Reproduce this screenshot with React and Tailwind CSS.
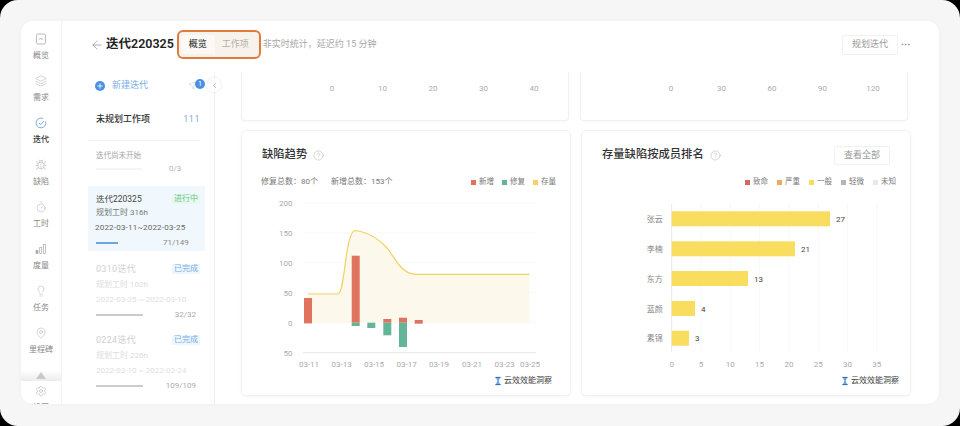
import React from 'react';
import { ArrowLeft, ChevronLeft, CircleHelp, Layers, Lightbulb, MapPin, Plus, Settings, Timer, Bug, Filter, Ellipsis } from 'lucide-react';

const ActivitySquare = ({ className }) => (
    <svg viewBox="0 0 12 12" fill="none" stroke="currentColor" strokeWidth="0.8" className={className}>
        <rect x="1.5" y="1" width="9" height="10" rx="1.5" />
        <path d="M3.8 6h1.2l.6-.8.8 1.2.5-.4h1.2" />
    </svg>
);

const IterIcon = ({ className }) => (
    <svg viewBox="0 0 12 12" fill="none" stroke="currentColor" strokeWidth="0.9" className={className}>
        <path d="M10.6 4.4A4.9 4.9 0 1 1 8.4 1.7" />
        <path d="M4 6l1.7 1.6L9 4" />
    </svg>
);

const MetricIcon = ({ className }) => (
    <svg viewBox="0 0 12 12" className={className} fill="none" stroke="currentColor" strokeWidth="0.7">
        <rect x="1" y="7.5" width="2" height="3" fill="currentColor" />
        <rect x="4.7" y="4.5" width="2" height="6" />
        <rect x="8.4" y="1.5" width="2" height="9" />
    </svg>
);

const navItems = [
    { label: '概览', Icon: ActivitySquare },
    { label: '需求', Icon: Layers },
    { label: '迭代', Icon: IterIcon, active: true },
    { label: '缺陷', Icon: Bug },
    { label: '工时', Icon: Timer },
    { label: '度量', Icon: MetricIcon },
    { label: '任务', Icon: Lightbulb },
    { label: '里程碑', Icon: MapPin },
];

const doneIterations = [
    { name: '0310迭代', hours: '规划工时 102h', dates: '2022-03-25 ~ 2022-03-10', count: '32/32' },
    { name: '0224迭代', hours: '规划工时 226h', dates: '2022-03-10 ~ 2022-02-24', count: '109/109' },
];

const trendLegend = [
    { label: '新增', color: 'bg-[#df7360]' },
    { label: '修复', color: 'bg-[#63b597]' },
    { label: '存量', color: 'bg-[#f6cf6c]' },
];

const rankLegend = [
    { label: '致命', color: 'bg-[#cf6a5c]' },
    { label: '严重', color: 'bg-[#eeaa5c]' },
    { label: '一般', color: 'bg-[#f8dc5c]' },
    { label: '轻微', color: 'bg-[#b5b5b5]' },
    { label: '未知', color: 'bg-[#e8e8e8]' },
];

const trendBars = [
    { x: 304, up: 298, down: 323.4 },
    { x: 351.7, up: 255.7, down: 322.7, green: 326 },
    { x: 367.3, up: 322.7, down: 322.7, green: 328 },
    { x: 383.3, up: 319, down: 322.7, green: 335.3 },
    { x: 399, up: 317.7, down: 322.7, green: 347 },
    { x: 414.7, up: 320, down: 323.7 },
];

const trendDates = [
    ['03-11', 309], ['03-13', 341.7], ['03-15', 374], ['03-17', 406.7],
    ['03-19', 439], ['03-21', 472], ['03-23', 504.7], ['03-25', 530],
];

const rankRows = [
    { name: '张云', value: 27, y: 211.3, end: 830 },
    { name: '李楠', value: 21, y: 241.3, end: 795 },
    { name: '东方', value: 13, y: 271, end: 748 },
    { name: '蓝颜', value: 4, y: 301, end: 695 },
    { name: '素锦', value: 3, y: 330.7, end: 689 },
];

const rankTicks = [0, 5, 10, 15, 20, 25, 30, 35];

const NavItem = ({ label, Icon, active }) => (
    <div className="h-[42px] shrink-0 flex flex-col items-center">
        <div className={`h-4 flex items-center ${active ? 'text-[#6ea6e0]' : 'text-[#aaaaaa]'}`}>
            <Icon className="w-3 h-3" strokeWidth={1} />
        </div>
        <div className={`mt-[4px] text-[8px] leading-[10px] whitespace-nowrap ${active ? 'text-[#333333] font-medium' : 'text-[#888888]'}`}>{label}</div>
    </div>
);

const Sidebar = () => (
    <div className="w-[41px] shrink-0 border-r border-[#f3f3f3] pt-[10px] flex flex-col items-center overflow-hidden">
        {navItems.map(item => <NavItem key={item.label} {...item} />)}
        <div className="mt-[3px] w-full h-[11px] shrink-0 flex justify-center items-end bg-gradient-to-b from-white to-[#ececec]">
            <div className="w-0 h-0 mb-[2px] border-x-[5px] border-x-transparent border-b-[7px] border-b-[#c9c9c9]" />
        </div>
        <div className="mt-[2px]">
            <NavItem label="设置" Icon={Settings} />
        </div>
    </div>
);

const Header = () => (
    <div className="h-[51px] shrink-0 flex items-center pl-[28px] pr-[28px] pb-[4px]">
        <ArrowLeft className="w-[14px] h-[14px] text-[#777777] shrink-0" strokeWidth={1} />
        <div className="ml-[2px] text-[12.5px] font-semibold text-[#222222] whitespace-nowrap">迭代220325</div>
        <div className="ml-[3px] w-[84px] h-[29px] rounded-[6px] border-2 border-[#e07b3c] bg-[#f8f2ed] flex items-center px-[2px]">
            <div className="w-[34px] h-[19px] rounded-[2px] bg-[#fbf8f5] flex items-center justify-center text-[9px] font-medium text-[#444444]">概览</div>
            <div className="ml-[7px] text-[9px] text-[#b5b0ac] whitespace-nowrap">工作项</div>
        </div>
        <div className="ml-[2px] text-[9px] text-[#a8a8a8] whitespace-nowrap">{'非实时统计\uFF0C延迟约 15 分钟'}</div>
        <div className="ml-auto w-[56px] h-5 border border-[#f1f1f1] rounded-[2px] flex items-center justify-center text-[9px] text-[#999999]">规划迭代</div>
        <Ellipsis className="ml-[2px] w-[11px] h-[11px] text-[#888888]" strokeWidth={1.5} />
    </div>
);

const IterationList = () => (
    <div className="relative w-[153px] shrink-0 border-r border-[#f1f1f1] pl-[26px] overflow-visible">
        <div className="h-[26px] flex items-center pl-[7px] pt-[1px]">
            <div className="w-[10px] h-[10px] rounded-full bg-[#4a90e2] flex items-center justify-center">
                <Plus className="w-2 h-2 text-white" strokeWidth={2.5} />
            </div>
            <div className="ml-[7px] text-[9px] text-[#7aaee6]">新建迭代</div>
            <div className="ml-auto mr-[17px] relative">
                <Filter className="w-2 h-2 text-[#aaaaaa] -rotate-12" strokeWidth={1} />
                <div className="absolute -top-[3px] left-[6px] w-[10px] h-[10px] rounded-full bg-[#4a90e2] text-white text-[7px] leading-[10px] text-center">1</div>
            </div>
        </div>
        <div className="absolute right-[-7px] top-[6px] w-[14px] h-[14px] rounded-full bg-white shadow-[0_0_3px_rgba(0,0,0,0.12)] flex items-center justify-center">
            <ChevronLeft className="w-[9px] h-[9px] text-[#777777]" strokeWidth={1.2} />
        </div>
        <div className="w-[112px] h-[43px] border-b border-[#f1f1f1] flex items-center justify-between pl-[8px] pt-[2px] text-[9px]">
            <span className="text-[#333333] font-medium">未规划工作项</span>
            <span className="text-[#84aeda] tracking-[0.5px]">111</span>
        </div>
        <div className="pl-[8px] pt-[9px] h-[45px]">
            <div className="text-[7.5px] leading-[12px] text-[#a5a5a5]">迭代尚未开始</div>
            <div className="mt-[1px] flex items-center h-3">
                <div className="w-[46px] h-[2px] bg-[#f5f5f5]" />
                <div className="ml-[27px] text-[8px] text-[#b5b5b5]">0/3</div>
            </div>
        </div>
        <div className="w-[117px] h-[65px] bg-[#f0f7fd] pl-[8px] pr-[5px] pt-[6px]">
            <div className="h-[14px] flex items-center justify-between text-[8.5px] text-[#444444]">
                <span>迭代220325</span>
                <span className="px-[2px] text-[8px] leading-[10px] bg-[#e9f8ee] text-[#6cc48a]">进行中</span>
            </div>
            <div className="h-[14px] flex items-center text-[8px] text-[#777777]">规划工时 316h</div>
            <div className="h-[15px] flex items-center text-[8px] text-[#666666] tracking-[0.2px] -ml-[1px]">2022-03-11~2022-03-25</div>
            <div className="h-[15px] flex items-center">
                <div className="w-[22px] h-[2px] bg-[#6ea6e0]" />
                <div className="ml-[45px] text-[8px] text-[#888888]">71/149</div>
            </div>
        </div>
        <div className="mt-[11px] flex flex-col gap-[8px]">
            {doneIterations.map(it => (
                <div key={it.name} className="w-[112px] pl-[8px]">
                    <div className="h-[14px] flex items-center justify-between text-[9px] text-[#d0d0d0]">
                        <span className="tracking-[0.3px] pt-[1px]">{it.name}</span>
                        <span className="px-[2px] text-[8px] leading-[10px] bg-[#eef6fd] text-[#78aee6]">已完成</span>
                    </div>
                    <div className="h-[18px] flex items-center text-[8px] text-[#dddddd]">{it.hours}</div>
                    <div className="h-[11px] flex items-center text-[8px] text-[#e0e0e0] whitespace-nowrap">{it.dates}</div>
                    <div className="h-[20px] flex items-center justify-between">
                        <div className="w-[47px] h-[2px] bg-[#cccccc]" />
                        <div className="text-[8px] text-[#aaaaaa] pr-[4px]">{it.count}</div>
                    </div>
                </div>
            ))}
        </div>
    </div>
);

const AxisCard = ({ ticks }) => (
    <div className="w-[328px] h-[49px] bg-white rounded-b-[4px] border border-t-0 border-[#f1f1f1] shadow-[0_1px_2px_rgba(0,0,0,0.03)] pl-[80px] pr-[24px] pt-[12px] flex justify-between">
        {ticks.map(t => <div key={t} className="w-5 text-center text-[8px] leading-[10px] text-[#aaaaaa]">{t}</div>)}
    </div>
);

const Legend = ({ items, gap }) => (
    <div className={`flex items-center ${gap}`}>
        {items.map(it => (
            <div key={it.label} className="flex items-center gap-[3px] text-[7.5px] text-[#777777]">
                <div className={`w-[5px] h-[5px] ${it.color}`} />
                <span>{it.label}</span>
            </div>
        ))}
    </div>
);

const Brand = ({ pad }) => (
    <div className={`h-[18px] ${pad} flex items-center justify-end gap-[3px] text-[8px] text-[#444444]`}>
        <svg viewBox="0 0 8 11" className="w-[6px] h-[10px]">
            <rect x="0.5" y="0" width="7" height="1.6" fill="#3a6fb5" />
            <rect x="0.5" y="9.4" width="7" height="1.6" fill="#3a6fb5" />
            <path d="M1.5 1.6h5L5 5.5l1.5 3.9h-5L3 5.5z" fill="#6aa9e6" />
        </svg>
        <span>云效效能洞察</span>
    </div>
);

const ChartCard = ({ title, action, legendRow, brandPad, children }) => (
    <div className="w-[330px] h-[266px] bg-white rounded-[5px] border border-[#f1f1f1] shadow-[0_1px_3px_rgba(0,0,0,0.04)] pt-[15px] overflow-hidden">
        <div className="h-[19px] pl-[20px] pr-[20px] flex items-center">
            <div className="text-[11.3px] font-medium text-[#333333]">{title}</div>
            <CircleHelp className="ml-[6px] w-[11px] h-[11px] -mt-[1px] text-[#aaaaaa]" strokeWidth={1} />
            {action}
        </div>
        <div className="mt-[11px] h-3 flex items-center justify-between pl-[19px] pr-[14px]">{legendRow}</div>
        <div className="mt-[7px]">{children}</div>
        <Brand pad={brandPad} />
    </div>
);

const TrendChart = () => (
    <svg viewBox="242 195 328 177" className="block w-[328px] h-[177px]" fontSize="8" fill="#aaaaaa">
        {[203, 233, 262.5, 292.5, 322.7].map(y => <line key={y} x1="303" x2="536" y1={y} y2={y} stroke="#f8f8f8" />)}
        <line x1="303" x2="536" y1="352.7" y2="352.7" stroke="#e6e6e6" />
        {[['200', 203], ['150', 233], ['100', 262.5], ['50', 292.5], ['0', 322.5], ['50', 352.5]].map(([t, y]) => (
            <text key={y} x="292.5" y={y + 3} textAnchor="end">{t}</text>
        ))}
        <path d="M308 294L338 294C345 294 345 232 355 230.5C368 232 380 240 388 249C396 260 402 274.3 416 274.3L529.3 274.3L529.3 322.7L308 322.7Z" fill="#fdf8ec" />
        <path d="M308 294L338 294C345 294 345 232 355 230.5C368 232 380 240 388 249C396 260 402 274.3 416 274.3L529.3 274.3" fill="none" stroke="#f0d25e" strokeWidth="1.2" />
        {trendBars.map(b => (
            <g key={b.x}>
                {b.down > b.up && <rect x={b.x} y={b.up} width="8" height={b.down - b.up} fill="#df7360" />}
                {b.green && <rect x={b.x} y="322.7" width="8" height={b.green - 322.7} fill="#63b597" />}
            </g>
        ))}
        {trendDates.map(([d, x]) => <text key={d} x={x} y="367" textAnchor="middle">{d}</text>)}
    </svg>
);

const RankChart = () => (
    <svg viewBox="582 195 328 177" className="block w-[328px] h-[177px]" fontSize="8" fill="#aaaaaa">
        {rankTicks.map((t, i) => (
            <line key={t} x1={671.7 + i * 29.3} x2={671.7 + i * 29.3} y1="204" y2="352" stroke={i === 0 ? '#e8e8e8' : '#f8f8f8'} />
        ))}
        {rankRows.map(r => (
            <g key={r.name}>
                <text x="662.7" y={r.y + 10.5} textAnchor="end" fill="#888888">{r.name}</text>
                <rect x="671.7" y={r.y} width={r.end - 671.7} height="15" fill="#f9dd5e" />
                <text x={r.end + 6} y={r.y + 10.5} fill="#444444">{r.value}</text>
            </g>
        ))}
        {rankTicks.map((t, i) => <text key={t} x={671.7 + i * 29.3} y="367" textAnchor="middle">{t}</text>)}
    </svg>
);

const Dashboard = () => (
    <div className="flex-1 min-w-0 pl-[26px] overflow-hidden">
        <div className="flex gap-[11px]">
            <AxisCard ticks={[0, 10, 20, 30, 40]} />
            <AxisCard ticks={[0, 30, 60, 90, 120]} />
        </div>
        <div className="mt-[9px] flex gap-[10px]">
            <ChartCard
                title="缺陷趋势"
                brandPad="pr-[18px]"
                legendRow={
                    <>
                        <div className="flex items-center gap-[13px] text-[8px] text-[#777777]">
                            <span>{'修复总数\uFF1A80个'}</span>
                            <span>{'新增总数\uFF1A153个'}</span>
                        </div>
                        <Legend items={trendLegend} gap="gap-[8px]" />
                    </>
                }
            >
                <TrendChart />
            </ChartCard>
            <ChartCard
                title="存量缺陷按成员排名"
                brandPad="pr-[11px]"
                action={
                    <div className="ml-auto w-14 h-[19px] border border-[#f1f1f1] rounded-[2px] flex items-center justify-center text-[9px] text-[#999999]">查看全部</div>
                }
                legendRow={
                    <>
                        <div />
                        <Legend items={rankLegend} gap="gap-[9px]" />
                    </>
                }
            >
                <RankChart />
            </ChartCard>
        </div>
    </div>
);

export default function App() {
    return (
        <div className="w-[960px] h-[426px] bg-black overflow-hidden font-['Roboto','Noto_Sans_CJK_SC',sans-serif]">
            <div className="w-full h-full rounded-[18px] bg-[#f6f6f7] pt-[21px] pl-[21px] pr-[21px] pb-[22px]">
                <div className="h-full bg-white rounded-[12px] flex overflow-hidden shadow-[0_0_4px_rgba(0,0,0,0.03)]">
                    <Sidebar />
                    <div className="flex-1 min-w-0 flex flex-col">
                        <Header />
                        <div className="flex-1 min-h-0 flex">
                            <IterationList />
                            <Dashboard />
                        </div>
                    </div>
                </div>
            </div>
        </div>
    );
}
